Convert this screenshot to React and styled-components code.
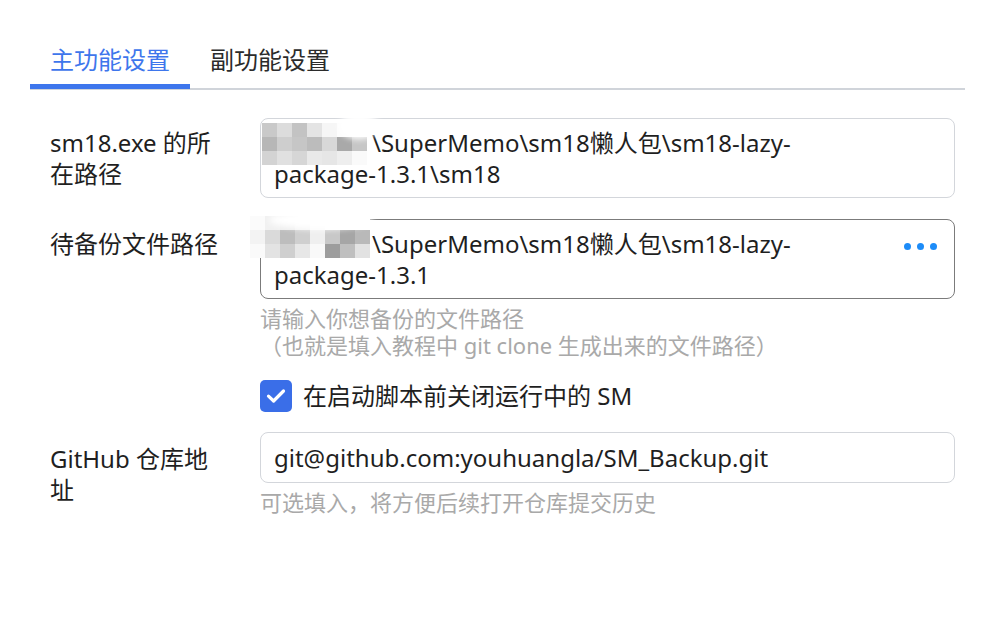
import React, { useState } from "react";
import styled, { createGlobalStyle } from "styled-components";

const font = `"Noto Sans", "Noto Sans CJK SC", sans-serif`;

const GlobalStyle = createGlobalStyle`
  html, body {
    margin: 0;
    padding: 0;
    background: #fff;
  }
  body {
    font-family: ${font};
    color: #1f1f1f;
  }
`;

const Page = styled.div`
  padding: 43px 31px 0 30px;
  width: 996px;
  height: 620px;
  box-sizing: border-box;
`;

const TabBar = styled.div`
  display: flex;
  border-bottom: 2px solid #d0d4da;
`;

const Tab = styled.div`
  padding: 0 20px 7px;
  font-size: 24px;
  line-height: 34px;
  color: ${(p) => (p.$active ? "#3e76ec" : "#2b2b2b")};
  border-bottom: 5px solid ${(p) => (p.$active ? "#3e76ec" : "transparent")};
  margin-bottom: -1px;
  cursor: pointer;
`;

const Form = styled.div`
  display: flex;
  flex-direction: column;
  gap: 20px;
  padding: 28px 10px 0 20px;
`;

const Row = styled.div`
  display: grid;
  grid-template-columns: 210px 1fr;
  margin-top: ${(p) => p.$mt || 0}px;
`;

const Label = styled.div`
  padding: ${(p) => p.$pt || 9}px 30px 0 0;
  font-size: 24px;
  line-height: 31px;
  color: #1f1f1f;
`;

const Field = styled.div`
  display: flex;
  flex-direction: column;
`;

const InputBox = styled.div`
  position: relative;
  border: 1px solid ${(p) => (p.$hover ? "#7b7b7b" : "#d3d6db")};
  border-radius: 8px;
  padding: ${(p) => p.$py || 8}px 80px ${(p) => p.$py || 8}px 13px;
  font-size: 24px;
  line-height: 31px;
  color: #1f1f1f;
  word-break: break-word;
`;

const Spacer = styled.span`
  display: inline-block;
  width: 98px;
  height: 1px;
`;

const Mosaic = styled.div`
  position: absolute;
  left: ${(p) => p.$left}px;
  top: ${(p) => p.$top}px;
  display: grid;
  grid-template-columns: repeat(${(p) => p.$cols}, 15px);
  grid-auto-rows: 14px;
  filter: blur(0.6px);
  pointer-events: none;
`;

const Cell = styled.div`
  background: ${(p) => p.$c};
`;

const Blob = styled.div`
  position: absolute;
  left: ${(p) => p.$left}px;
  top: ${(p) => p.$top}px;
  width: ${(p) => p.$w}px;
  height: ${(p) => p.$h}px;
  background: #fff;
  border-radius: 50%;
  filter: blur(3px);
  pointer-events: none;
`;

const Dots = styled.div`
  position: absolute;
  right: 17px;
  top: 23px;
  display: flex;
  gap: 6px;
  span {
    width: 7px;
    height: 7px;
    border-radius: 50%;
    background: #1d8cf8;
  }
`;

const Help = styled.div`
  margin-top: ${(p) => p.$mt || 6}px;
  font-size: 22px;
  line-height: 27px;
  color: #a9a9a9;
`;

const CheckRow = styled.label`
  display: flex;
  align-items: center;
  gap: 11px;
  font-size: 24px;
  line-height: 32px;
  color: #1f1f1f;
  cursor: pointer;
`;

const Box = styled.span`
  width: 32px;
  height: 32px;
  border-radius: 5px;
  background: ${(p) => (p.$checked ? "#3a6ee8" : "#fff")};
  border: ${(p) => (p.$checked ? "none" : "1px solid #d3d6db")};
  display: flex;
  align-items: center;
  justify-content: center;
  flex: none;
`;

const shades1 = [
  "#c9c9c9", "#dcdcdc", "#c3c3c3", "#e4e4e4", "#f6f6f6", "#fdfdfd", "#fff",
  "#b7b7b7", "#cecece", "#c6c6c6", "#bcbcbc", "#d8d8d8", "#a9a9a9", "#c6c6c6",
  "#d3d3d3", "#e0e0e0", "#d6d6d6", "#e9e9e9", "#e6e6e6", "#eeeeee", "#fafafa",
];

const shades2 = [
  "#fbfbfb", "#f1f1f1", "#eeeeee", "#f4f4f4", "#fbfbfb", "#fff", "#fff", "#fff",
  "#f3f3f3", "#dadada", "#bdbdbd", "#cfcfcf", "#efefef", "#c8c8c8", "#a6a6a6", "#b9b9b9",
  "#fafafa", "#e3e3e3", "#cfcfcf", "#e7e7e7", "#f9f9f9", "#9d9d9d", "#bfbfbf", "#e2e2e2",
];

function Pixels({ shades, cols, left, top }) {
  return (
    <Mosaic $cols={cols} $left={left} $top={top}>
      {shades.map((c, i) => (
        <Cell key={i} $c={c} />
      ))}
    </Mosaic>
  );
}

export default function App() {
  const [tab, setTab] = useState(0);
  const [closeSm, setCloseSm] = useState(true);

  return (
    <Page>
      <GlobalStyle />
      <TabBar>
        <Tab $active={tab === 0} onClick={() => setTab(0)}>
          主功能设置
        </Tab>
        <Tab $active={tab === 1} onClick={() => setTab(1)}>
          副功能设置
        </Tab>
      </TabBar>

      <Form>
        <Row>
          <Label>sm18.exe 的所在路径</Label>
          <Field>
            <InputBox>
              <Spacer />\SuperMemo\sm18懒人包\sm18-lazy-package-1.3.1\sm18
              <Pixels shades={shades1} cols={7} left={1} top={4} />
              <Blob $left={78} $top={-6} $w={40} $h={26} />
            </InputBox>
          </Field>
        </Row>

        <Row $mt={1}>
          <Label>待备份文件路径</Label>
          <Field>
            <InputBox $hover>
              <Spacer />\SuperMemo\sm18懒人包\sm18-lazy-package-1.3.1
              <Pixels shades={shades2} cols={8} left={-11} top={-4} />
              <Blob $left={8} $top={-9} $w={104} $h={18} />
              <Dots>
                <span />
                <span />
                <span />
              </Dots>
            </InputBox>
            <Help>
              请输入你想备份的文件路径
              <br />
              （也就是填入教程中 git clone 生成出来的文件路径）
            </Help>
          </Field>
        </Row>

        <Row $mt={1}>
          <div />
          <CheckRow onClick={() => setCloseSm(!closeSm)}>
            <Box $checked={closeSm}>
              {closeSm && (
                <svg width="20" height="16" viewBox="0 0 20 16">
                  <path
                    d="M2.5 8.2 L7.6 13 L17.5 3"
                    fill="none"
                    stroke="#fff"
                    strokeWidth="3.2"
                    strokeLinecap="round"
                    strokeLinejoin="round"
                  />
                </svg>
              )}
            </Box>
            在启动脚本前关闭运行中的 SM
          </CheckRow>
        </Row>

        <Row>
          <Label $pt={11}>GitHub 仓库地址</Label>
          <Field>
            <InputBox $py={9}>git@github.com:youhuangla/SM_Backup.git</InputBox>
            <Help>可选填入，将方便后续打开仓库提交历史</Help>
          </Field>
        </Row>
      </Form>
    </Page>
  );
}
